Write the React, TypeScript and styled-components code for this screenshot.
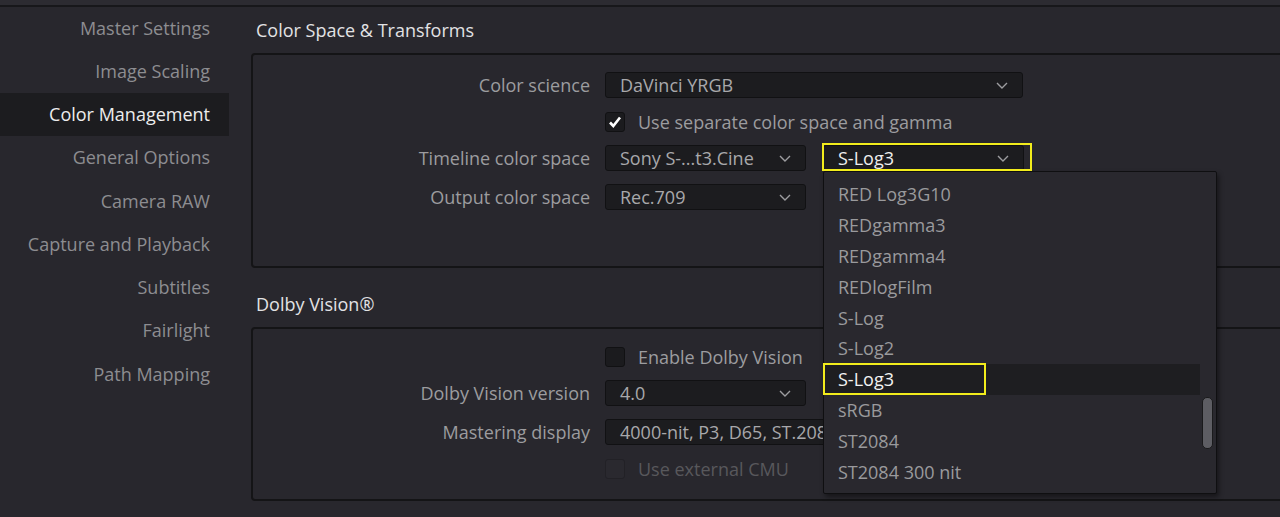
import React from 'react';
import styled, { createGlobalStyle } from 'styled-components';

const GlobalStyle = createGlobalStyle`
  html, body {
    margin: 0;
    background: #28272d;
    overflow: hidden;
  }
  body {
    font-family: "Open Sans", "Noto Sans", sans-serif;
    font-size: 18px;
  }
`;

const Window = styled.div`
  width: 1280px;
  height: 517px;
  display: flex;
  flex-direction: column;
  background: #28272d;
  overflow: hidden;
`;

const TopStrip = styled.div`
  height: 5px;
  flex-shrink: 0;
  background: #2c2b31;
  border-bottom: 2px solid #17171a;
`;

const Body = styled.div`
  display: flex;
  flex: 1;
  min-height: 0;
`;

const Sidebar = styled.nav`
  width: 229px;
  flex-shrink: 0;
  display: flex;
  flex-direction: column;
  margin-top: -1px;
`;

const NavItem = styled.div<{ $active?: boolean }>`
  height: 43.25px;
  display: flex;
  align-items: center;
  justify-content: flex-end;
  padding-right: 19px;
  color: ${(p) => (p.$active ? '#ededed' : '#8d8d91')};
  background: ${(p) => (p.$active ? '#1c1c1f' : 'transparent')};
`;

const Content = styled.main`
  flex: 1;
  padding-left: 22px;
  margin-right: -12px;
  display: flex;
  flex-direction: column;
`;

const SectionTitle = styled.div<{ $gap?: number }>`
  height: 46px;
  line-height: 46px;
  padding-left: 5px;
  margin-top: ${(p) => p.$gap ?? 0}px;
  color: #e2e2e4;
`;

const Panel = styled.section<{ $h: number }>`
  height: ${(p) => p.$h}px;
  box-sizing: border-box;
  border: 2px solid #141416;
  border-radius: 4px;
  padding-top: 17px;
  display: flex;
  flex-direction: column;
  gap: 13px;
`;

const Row = styled.div`
  display: grid;
  grid-template-columns: 337px auto;
  column-gap: 15px;
  align-items: center;
`;

const Label = styled.div`
  text-align: right;
  color: #9c9c9f;
`;

const Controls = styled.div`
  display: flex;
  gap: 17px;
  align-items: center;
`;

const SelectBox = styled.div<{ $w: number; $bright?: boolean }>`
  position: relative;
  width: ${(p) => p.$w}px;
  height: 26px;
  box-sizing: border-box;
  background: #1c1c1f;
  border: 1px solid #111113;
  border-radius: 3px;
  padding: 0 36px 0 14px;
  display: flex;
  align-items: center;
  color: ${(p) => (p.$bright ? '#eeeeee' : '#a8a8ab')};
  white-space: nowrap;
`;

const Chevron = styled.svg`
  position: absolute;
  right: 14px;
  top: 50%;
  margin-top: -3px;
`;

const CheckRow = styled.label<{ $disabled?: boolean }>`
  display: flex;
  align-items: center;
  gap: 13px;
  height: 21px;
  color: ${(p) => (p.$disabled ? '#58585c' : '#9c9c9f')};
`;

const Box = styled.span<{ $disabled?: boolean }>`
  width: 20px;
  height: 20px;
  box-sizing: border-box;
  border-radius: 3px;
  background: ${(p) => (p.$disabled ? '#2a292f' : '#1b1b1e')};
  border: 1px solid ${(p) => (p.$disabled ? '#222126' : '#111113')};
  display: flex;
  align-items: center;
  justify-content: center;
`;

// yellow callout frames drawn over a control
const Highlight = styled.div<{ $l: number; $t: number; $w: number; $h: number }>`
  position: absolute;
  left: ${(p) => p.$l}px;
  top: ${(p) => p.$t}px;
  width: ${(p) => p.$w}px;
  height: ${(p) => p.$h}px;
  box-sizing: border-box;
  border: 2px solid #f2ec1c;
  pointer-events: none;
  z-index: 3;
`;

const Menu = styled.ul`
  position: absolute;
  left: -1px;
  top: 25px;
  width: 394px;
  height: 323px;
  box-sizing: border-box;
  margin: 0;
  padding: 7px 16px 0 0;
  list-style: none;
  background: #29282e;
  border: 1px solid #0f0f11;
  border-radius: 2px;
  box-shadow: 2px 3px 5px rgba(0, 0, 0, 0.45);
  z-index: 2;
`;

const MenuItem = styled.li<{ $active?: boolean }>`
  position: relative;
  height: 30.8px;
  display: flex;
  align-items: center;
  padding-left: 14px;
  color: ${(p) => (p.$active ? '#f2f2f2' : '#9a9a9d')};
  background: ${(p) => (p.$active ? '#1e1e21' : 'transparent')};
`;

const ScrollThumb = styled.div`
  position: absolute;
  right: 3px;
  top: 225px;
  width: 11px;
  height: 52px;
  box-sizing: border-box;
  background: #5d5d63;
  border: 1px solid #1a1a1c;
  border-radius: 5px;
`;

const ChevronDown = () => (
  <Chevron width="12" height="7" viewBox="0 0 12 7">
    <path d="M1 1 L6 6 L11 1" fill="none" stroke="#9d9da0" strokeWidth="1.4" />
  </Chevron>
);

const Select: React.FC<{ w: number; value: string; bright?: boolean; children?: React.ReactNode }> = ({
  w,
  value,
  bright,
  children,
}) => (
  <SelectBox $w={w} $bright={bright}>
    {value}
    <ChevronDown />
    {children}
  </SelectBox>
);

const Checkbox: React.FC<{ checked?: boolean; disabled?: boolean; text: string }> = ({
  checked,
  disabled,
  text,
}) => (
  <CheckRow $disabled={disabled}>
    <Box $disabled={disabled}>
      {checked && (
        <svg width="16" height="16" viewBox="0 0 16 16">
          <path d="M3 8.5 L6.3 12 L13 3.5" fill="none" stroke="#ffffff" strokeWidth="2.6" />
        </svg>
      )}
    </Box>
    {text}
  </CheckRow>
);

const navItems = [
  'Master Settings',
  'Image Scaling',
  'Color Management',
  'General Options',
  'Camera RAW',
  'Capture and Playback',
  'Subtitles',
  'Fairlight',
  'Path Mapping',
];

const gammaOptions = [
  'RED Log3G10',
  'REDgamma3',
  'REDgamma4',
  'REDlogFilm',
  'S-Log',
  'S-Log2',
  'S-Log3',
  'sRGB',
  'ST2084',
  'ST2084 300 nit',
];

const App: React.FC = () => {
  const current = 'S-Log3';

  return (
    <Window>
      <GlobalStyle />
      <TopStrip />
      <Body>
        <Sidebar>
          {navItems.map((item) => (
            <NavItem key={item} $active={item === 'Color Management'}>
              {item}
            </NavItem>
          ))}
        </Sidebar>

        <Content>
          <SectionTitle>Color Space &amp; Transforms</SectionTitle>
          <Panel $h={215}>
            <Row>
              <Label>Color science</Label>
              <Controls>
                <Select w={418} value="DaVinci YRGB" />
              </Controls>
            </Row>
            <Row>
              <span />
              <Checkbox checked text="Use separate color space and gamma" />
            </Row>
            <Row>
              <Label>Timeline color space</Label>
              <Controls>
                <Select w={201} value="Sony S-...t3.Cine" />
                <Select w={201} value={current} bright>
                  <Highlight $l={-2} $t={-3} $w={210} $h={28} />
                  <Menu>
                    {gammaOptions.map((opt) => (
                      <MenuItem key={opt} $active={opt === current}>
                        {opt}
                        {opt === current && <Highlight $l={-1} $t={-1} $w={163} $h={32} />}
                      </MenuItem>
                    ))}
                    <ScrollThumb />
                  </Menu>
                </Select>
              </Controls>
            </Row>
            <Row>
              <Label>Output color space</Label>
              <Controls>
                <Select w={201} value="Rec.709" />
              </Controls>
            </Row>
          </Panel>

          <SectionTitle $gap={13}>Dolby Vision®</SectionTitle>
          <Panel $h={174}>
            <Row>
              <span />
              <Checkbox text="Enable Dolby Vision" />
            </Row>
            <Row>
              <Label>Dolby Vision version</Label>
              <Controls>
                <Select w={201} value="4.0" />
              </Controls>
            </Row>
            <Row>
              <Label>Mastering display</Label>
              <Controls>
                <Select w={418} value="4000-nit, P3, D65, ST.2084" />
              </Controls>
            </Row>
            <Row>
              <span />
              <Checkbox disabled text="Use external CMU" />
            </Row>
          </Panel>
        </Content>
      </Body>
    </Window>
  );
};

export default App;
